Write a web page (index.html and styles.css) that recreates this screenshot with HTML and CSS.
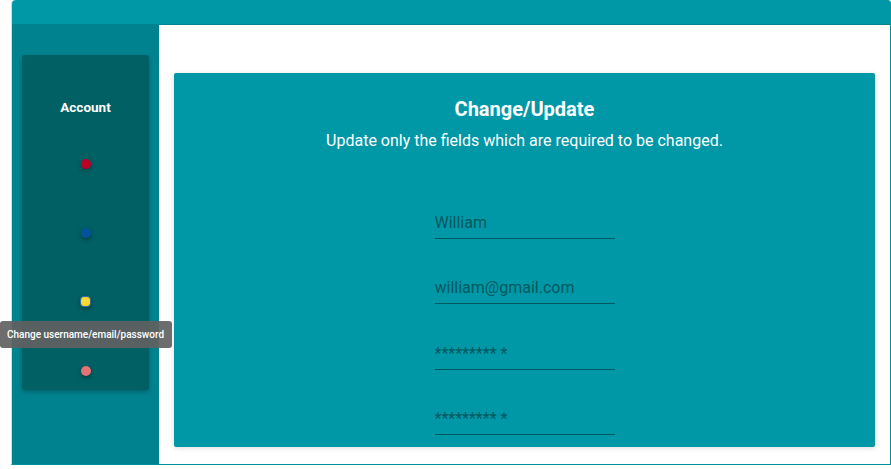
FILE: index.html
```html
<!DOCTYPE html>
<html>
<head>
<meta charset="utf-8">
<link rel="stylesheet" href="styles.css">
</head>
<body>
<div class="app">
  <header class="topbar"></header>
  <div class="body">
    <aside class="sidebar">
      <nav class="menu">
        <h3 class="menu-title">Account</h3>
        <ul class="dots">
          <li class="dot dot-red"></li>
          <li class="dot dot-blue"></li>
          <li class="dot dot-yellow"></li>
          <li class="dot dot-pink"></li>
        </ul>
      </nav>
    </aside>
    <main class="main">
      <section class="card">
        <h2 class="card-title">Change/Update</h2>
        <p class="card-sub">Update only the fields which are required to be changed.</p>
        <form class="form">
          <div class="field"><input class="input" type="text" placeholder="William"></div>
          <div class="field"><input class="input" type="text" placeholder="william@gmail.com"></div>
          <div class="field"><input class="input" type="text" placeholder="********* *"></div>
          <div class="field"><input class="input" type="text" placeholder="********* *"></div>
        </form>
      </section>
    </main>
  </div>
  <div class="tooltip">Change username/email/password</div>
</div>
</body>
</html>
```

FILE: styles.css
```css
* { box-sizing: border-box; }
html, body { margin: 0; padding: 0; background: #ffffff; }
body { font-family: Roboto, "Noto Sans", sans-serif; width: 891px; height: 469px; overflow: hidden; }

.app {
  position: relative;
  margin-left: 11px;
  width: 880px;
  height: 465px;
  border: 1px solid #00929e;
  border-top: none;
  border-left-color: #d9dcdc;
  border-radius: 4px 4px 0 0;
  display: flex;
  flex-direction: column;
}
.topbar {
  height: 25px;
  background: #0097a7;
  border-bottom: 1px solid #00858f;
  border-radius: 4px 4px 0 0;
  margin-right: -1px;
  flex: none;
}
.body { flex: 1; display: flex; min-height: 0; }
.sidebar {
  width: 147px;
  background: #00838f;
  padding: 30px 10px 0 10px;
  flex: none;
}
.menu {
  background: #006064;
  border-radius: 3px;
  height: 335px;
  box-shadow: 0 2px 4px rgba(0,0,0,0.25);
  padding-top: 42px;
  display: flex;
  flex-direction: column;
  align-items: center;
}
.menu-title {
  margin: 0;
  color: #ffffff;
  font-size: 13.5px;
  font-weight: 700;
  line-height: 20px;
}
.dots {
  list-style: none;
  margin: 42px 0 0 0;
  padding: 0;
  display: flex;
  flex-direction: column;
  align-items: center;
  gap: 58.7px;
}
.dot {
  width: 10px;
  height: 10px;
  border-radius: 50%;
  box-shadow: 0 2px 4px rgba(0,0,0,0.35);
}
.dot-red { background: #bd0026; }
.dot-blue { background: #03539c; }
.dot-yellow { background: #fdd835; border: 1.5px solid #2a6aa8; width: 11px; height: 11px; border-radius: 4px; }
.dot-pink { background: #e57373; }

.main {
  flex: 1;
  background: #ffffff;
  padding: 48px 15px 17px 15px;
}
.card {
  height: 100%;
  background: #0097a7;
  border-radius: 2px;
  box-shadow: 0 1px 5px rgba(0,0,0,0.15);
  padding-top: 24px;
  text-align: center;
  color: #ffffff;
}
.card-title {
  margin: 0;
  font-size: 20px;
  font-weight: 700;
  line-height: 24px;
}
.card-sub {
  margin: 10px 0 0 0;
  font-size: 16px;
  line-height: 20px;
}
.form {
  margin-top: 48px;
  display: flex;
  flex-direction: column;
  align-items: center;
  gap: 25.4px;
}
.field { width: 180px; }
.input {
  display: block;
  width: 180px;
  height: 40px;
  border: none;
  border-bottom: 1px solid #00595e;
  background: transparent;
  padding: 8px 0 0 0;
  font-family: Roboto, sans-serif;
  font-size: 16px;
  color: #00595e;
  outline: none;
}
.input::placeholder { color: #00595e; opacity: 1; }

.tooltip {
  position: absolute;
  left: -12px;
  top: 321px;
  width: 172px;
  height: 27px;
  background: rgba(97,97,97,0.92);
  color: #ffffff;
  font-size: 10px;
  font-weight: 500;
  line-height: 27px;
  padding-left: 7px;
  border-radius: 3px;
  white-space: nowrap;
}
```
